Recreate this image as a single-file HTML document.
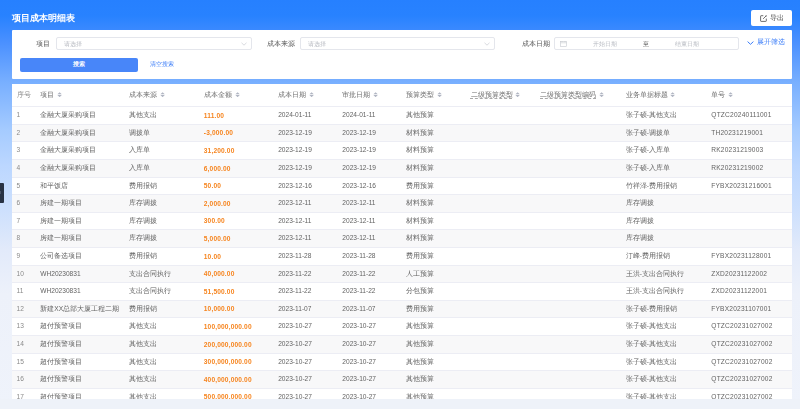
<!DOCTYPE html>
<html><head><meta charset="utf-8">
<style>
*{margin:0;padding:0;box-sizing:border-box}
html,body{width:800px;height:409px;overflow:hidden}
body{position:relative;font-family:"Liberation Sans",sans-serif;
background:linear-gradient(180deg,#2680ff 0px,#2882ff 16px,#4a90ff 42px,#78afff 82px,#a5cbff 130px,#bcd7ff 166px,#cde0fd 210px,#e2eafa 250px,#edf1fa 294px,#eff3fb 409px);}
.abs{position:absolute}
.wrap{position:absolute;left:0;top:0;width:800px;height:409px;filter:blur(0.45px)}
.title{position:absolute;left:11.8px;top:12.3px;color:#fff;font-size:9.35px;font-weight:bold;line-height:12px;white-space:nowrap}
.export{position:absolute;left:751px;top:10px;width:41px;height:16px;background:#fff;border-radius:2px}
.export svg{position:absolute;left:9px;top:5px;width:7px;height:7px}
.export span{position:absolute;left:19px;top:3.2px;font-size:6.5px;line-height:10px;color:#4a4a4a;font-weight:500}
.card{position:absolute;left:12px;top:30px;width:780px;height:49px;background:#fff;border-radius:1px}
.lbl{position:absolute;font-size:6.5px;line-height:10px;color:#555;font-weight:500;white-space:nowrap}
.inp{position:absolute;top:7px;height:12.5px;border:0.6px solid #e4e6ec;border-radius:2px;background:#fff}
.ph{position:absolute;font-size:5.7px;line-height:10px;color:#b9bcc3;white-space:nowrap}
.btn{position:absolute;left:8px;top:28px;width:118px;height:14px;background:#4886f9;border-radius:2px;color:#fff;font-size:6px;line-height:13.6px;text-align:center;font-weight:bold}
.link{position:absolute;font-size:6px;line-height:10px;color:#3a7cf8;white-space:nowrap}
.table{position:absolute;left:12px;top:84px;width:780px;height:330px;background:#fff;overflow:hidden}
.h{position:absolute;top:6px;height:10px;font-size:6.5px;font-weight:500;line-height:10px;color:#6e6e6e;white-space:nowrap;display:flex;align-items:center}
.h.seq{color:#8c8c8c}
.h.ul span{text-decoration:underline dashed #a8a8a8;text-underline-offset:1.2px;text-decoration-thickness:0.7px}
.sort{width:5.2px;height:5.4px;margin-left:2.8px;fill:#b0b5c2;position:relative;top:-0.3px}
.row{position:absolute;left:0;width:780px;height:17.65px;border-top:0.7px solid #ecedf4;background:#fff}
.row.even{background:#f8f8f9}
.c{position:absolute;top:3.0px;font-size:6.6px;line-height:10px;color:#636363;font-weight:500;white-space:nowrap}
.c.amt{color:#f6841e;font-weight:bold;letter-spacing:0.15px;top:3.6px}
.c.seq{color:#8a8a8a}
.c.doc{letter-spacing:0.2px}
.tab{position:absolute;left:0;top:183.1px;width:4px;height:19.5px;background:#283244;border-radius:0 1px 1px 0}
.tab:after{content:"";position:absolute;left:0;top:8px;width:1px;height:3px;background:#4a5466}
.frost{position:absolute;left:0;top:398.7px;width:800px;height:11px;background:#eef2f9}
</style></head><body><div class="wrap">
<div class="title">项目成本明细表</div>
<div class="export"><svg viewBox="0 0 7 7"><path d="M3.3 0.7 H1.1 Q0.6 0.7 0.6 1.2 V5.9 Q0.6 6.4 1.1 6.4 H5.8 Q6.3 6.4 6.3 5.9 V3.6" fill="none" stroke="#555" stroke-width="0.85"/><path d="M3.1 3.9 L6.2 0.8" fill="none" stroke="#555" stroke-width="0.85"/><circle cx="6.1" cy="0.9" r="0.6" fill="#555"/></svg><span>导出</span></div>
<div class="card">
  <div class="lbl" style="left:24.4px;top:8.5px">项目</div>
  <div class="inp" style="left:44px;width:196px"><div class="ph" style="left:7px;top:0.7px">请选择</div>
    <svg class="abs" style="left:183.5px;top:4.2px;width:6px;height:4px" viewBox="0 0 6 4"><path d="M0.5 0.8 L3 3.2 L5.5 0.8" fill="none" stroke="#c0c3c9" stroke-width="0.6"/></svg></div>
  <div class="lbl" style="left:254.8px;top:8.5px">成本来源</div>
  <div class="inp" style="left:288px;width:195px"><div class="ph" style="left:7px;top:0.7px">请选择</div>
    <svg class="abs" style="left:182.5px;top:4.2px;width:6px;height:4px" viewBox="0 0 6 4"><path d="M0.5 0.8 L3 3.2 L5.5 0.8" fill="none" stroke="#c0c3c9" stroke-width="0.6"/></svg></div>
  <div class="lbl" style="left:510.2px;top:8.5px">成本日期</div>
  <div class="inp" style="left:542px;width:185px">
    <svg class="abs" style="left:5.2px;top:2.6px;width:7px;height:6px" viewBox="0 0 7 6"><rect x="0.6" y="0.6" width="5.8" height="4.8" fill="none" stroke="#c6c9cf" stroke-width="0.6"/><path d="M0.6 1.8 H6.4 M2 0 V1.2 M5 0 V1.2" stroke="#c6c9cf" stroke-width="0.6"/></svg>
    <div class="ph" style="left:37.6px;top:0.6px">开始日期</div>
    <div class="lbl" style="left:87.6px;top:0.8px;font-size:5.8px;color:#444">至</div>
    <div class="ph" style="left:120.4px;top:0.6px">结束日期</div>
  </div>
  <svg class="abs" style="left:734.5px;top:10.6px;width:7px;height:4px" viewBox="0 0 7 4"><path d="M0.6 0.6 L3.5 3.3 L6.4 0.6" fill="none" stroke="#3a7cf8" stroke-width="1"/></svg>
  <div class="link" style="left:744.6px;top:7.4px;font-size:6.5px;font-weight:500;color:#3a7cf8">展开筛选</div>
  <div class="btn">搜索</div>
  <div class="link" style="left:138px;top:29.2px;font-size:5.7px">清空搜索</div>
</div>
<div class="table">
<div class="h seq" style="left:4.60px"><span>序号</span></div>
<div class="h" style="left:28.30px"><span>项目</span><svg class="sort" viewBox="0 0 5 5.4"><path d="M0.3 2.3 L2.5 0.2 L4.7 2.3Z M0.3 3.1 L2.5 5.2 L4.7 3.1Z"/></svg></div>
<div class="h" style="left:116.75px"><span>成本来源</span><svg class="sort" viewBox="0 0 5 5.4"><path d="M0.3 2.3 L2.5 0.2 L4.7 2.3Z M0.3 3.1 L2.5 5.2 L4.7 3.1Z"/></svg></div>
<div class="h" style="left:191.80px"><span>成本金额</span><svg class="sort" viewBox="0 0 5 5.4"><path d="M0.3 2.3 L2.5 0.2 L4.7 2.3Z M0.3 3.1 L2.5 5.2 L4.7 3.1Z"/></svg></div>
<div class="h" style="left:266.20px"><span>成本日期</span><svg class="sort" viewBox="0 0 5 5.4"><path d="M0.3 2.3 L2.5 0.2 L4.7 2.3Z M0.3 3.1 L2.5 5.2 L4.7 3.1Z"/></svg></div>
<div class="h" style="left:330.30px"><span>审批日期</span><svg class="sort" viewBox="0 0 5 5.4"><path d="M0.3 2.3 L2.5 0.2 L4.7 2.3Z M0.3 3.1 L2.5 5.2 L4.7 3.1Z"/></svg></div>
<div class="h" style="left:394.30px"><span>预算类型</span><svg class="sort" viewBox="0 0 5 5.4"><path d="M0.3 2.3 L2.5 0.2 L4.7 2.3Z M0.3 3.1 L2.5 5.2 L4.7 3.1Z"/></svg></div>
<div class="h ul" style="left:458.60px"><span>二级预算类型</span><svg class="sort" viewBox="0 0 5 5.4"><path d="M0.3 2.3 L2.5 0.2 L4.7 2.3Z M0.3 3.1 L2.5 5.2 L4.7 3.1Z"/></svg></div>
<div class="h ul" style="left:528.40px"><span>二级预算类型编码</span><svg class="sort" viewBox="0 0 5 5.4"><path d="M0.3 2.3 L2.5 0.2 L4.7 2.3Z M0.3 3.1 L2.5 5.2 L4.7 3.1Z"/></svg></div>
<div class="h" style="left:613.70px"><span>业务单据标题</span><svg class="sort" viewBox="0 0 5 5.4"><path d="M0.3 2.3 L2.5 0.2 L4.7 2.3Z M0.3 3.1 L2.5 5.2 L4.7 3.1Z"/></svg></div>
<div class="h" style="left:699.30px"><span>单号</span><svg class="sort" viewBox="0 0 5 5.4"><path d="M0.3 2.3 L2.5 0.2 L4.7 2.3Z M0.3 3.1 L2.5 5.2 L4.7 3.1Z"/></svg></div>
<div class="row" style="top:22.30px"><div class="c seq" style="left:4.60px">1</div><div class="c" style="left:28.30px">金融大厦采购项目</div><div class="c" style="left:116.75px">其他支出</div><div class="c amt" style="left:191.80px">111.00</div><div class="c" style="left:266.20px">2024-01-11</div><div class="c" style="left:330.30px">2024-01-11</div><div class="c" style="left:394.30px">其他预算</div><div class="c" style="left:613.70px">张子硕-其他支出</div><div class="c doc" style="left:699.30px">QTZC20240111001</div></div>
<div class="row even" style="top:39.89px"><div class="c seq" style="left:4.60px">2</div><div class="c" style="left:28.30px">金融大厦采购项目</div><div class="c" style="left:116.75px">调拨单</div><div class="c amt" style="left:191.80px">-3,000.00</div><div class="c" style="left:266.20px">2023-12-19</div><div class="c" style="left:330.30px">2023-12-19</div><div class="c" style="left:394.30px">材料预算</div><div class="c" style="left:613.70px">张子硕-调拨单</div><div class="c doc" style="left:699.30px">TH20231219001</div></div>
<div class="row" style="top:57.48px"><div class="c seq" style="left:4.60px">3</div><div class="c" style="left:28.30px">金融大厦采购项目</div><div class="c" style="left:116.75px">入库单</div><div class="c amt" style="left:191.80px">31,200.00</div><div class="c" style="left:266.20px">2023-12-19</div><div class="c" style="left:330.30px">2023-12-19</div><div class="c" style="left:394.30px">材料预算</div><div class="c" style="left:613.70px">张子硕-入库单</div><div class="c doc" style="left:699.30px">RK20231219003</div></div>
<div class="row even" style="top:75.07px"><div class="c seq" style="left:4.60px">4</div><div class="c" style="left:28.30px">金融大厦采购项目</div><div class="c" style="left:116.75px">入库单</div><div class="c amt" style="left:191.80px">6,000.00</div><div class="c" style="left:266.20px">2023-12-19</div><div class="c" style="left:330.30px">2023-12-19</div><div class="c" style="left:394.30px">材料预算</div><div class="c" style="left:613.70px">张子硕-入库单</div><div class="c doc" style="left:699.30px">RK20231219002</div></div>
<div class="row" style="top:92.66px"><div class="c seq" style="left:4.60px">5</div><div class="c" style="left:28.30px">和平饭店</div><div class="c" style="left:116.75px">费用报销</div><div class="c amt" style="left:191.80px">50.00</div><div class="c" style="left:266.20px">2023-12-16</div><div class="c" style="left:330.30px">2023-12-16</div><div class="c" style="left:394.30px">费用预算</div><div class="c" style="left:613.70px">竹祥泽-费用报销</div><div class="c doc" style="left:699.30px">FYBX20231216001</div></div>
<div class="row even" style="top:110.25px"><div class="c seq" style="left:4.60px">6</div><div class="c" style="left:28.30px">房建一期项目</div><div class="c" style="left:116.75px">库存调拨</div><div class="c amt" style="left:191.80px">2,000.00</div><div class="c" style="left:266.20px">2023-12-11</div><div class="c" style="left:330.30px">2023-12-11</div><div class="c" style="left:394.30px">材料预算</div><div class="c" style="left:613.70px">库存调拨</div></div>
<div class="row" style="top:127.84px"><div class="c seq" style="left:4.60px">7</div><div class="c" style="left:28.30px">房建一期项目</div><div class="c" style="left:116.75px">库存调拨</div><div class="c amt" style="left:191.80px">300.00</div><div class="c" style="left:266.20px">2023-12-11</div><div class="c" style="left:330.30px">2023-12-11</div><div class="c" style="left:394.30px">材料预算</div><div class="c" style="left:613.70px">库存调拨</div></div>
<div class="row even" style="top:145.43px"><div class="c seq" style="left:4.60px">8</div><div class="c" style="left:28.30px">房建一期项目</div><div class="c" style="left:116.75px">库存调拨</div><div class="c amt" style="left:191.80px">5,000.00</div><div class="c" style="left:266.20px">2023-12-11</div><div class="c" style="left:330.30px">2023-12-11</div><div class="c" style="left:394.30px">材料预算</div><div class="c" style="left:613.70px">库存调拨</div></div>
<div class="row" style="top:163.02px"><div class="c seq" style="left:4.60px">9</div><div class="c" style="left:28.30px">公司备选项目</div><div class="c" style="left:116.75px">费用报销</div><div class="c amt" style="left:191.80px">10.00</div><div class="c" style="left:266.20px">2023-11-28</div><div class="c" style="left:330.30px">2023-11-28</div><div class="c" style="left:394.30px">费用预算</div><div class="c" style="left:613.70px">汀峰-费用报销</div><div class="c doc" style="left:699.30px">FYBX20231128001</div></div>
<div class="row even" style="top:180.61px"><div class="c seq" style="left:4.60px">10</div><div class="c" style="left:28.30px">WH20230831</div><div class="c" style="left:116.75px">支出合同执行</div><div class="c amt" style="left:191.80px">40,000.00</div><div class="c" style="left:266.20px">2023-11-22</div><div class="c" style="left:330.30px">2023-11-22</div><div class="c" style="left:394.30px">人工预算</div><div class="c" style="left:613.70px">王洪-支出合同执行</div><div class="c doc" style="left:699.30px">ZXD20231122002</div></div>
<div class="row" style="top:198.20px"><div class="c seq" style="left:4.60px">11</div><div class="c" style="left:28.30px">WH20230831</div><div class="c" style="left:116.75px">支出合同执行</div><div class="c amt" style="left:191.80px">51,500.00</div><div class="c" style="left:266.20px">2023-11-22</div><div class="c" style="left:330.30px">2023-11-22</div><div class="c" style="left:394.30px">分包预算</div><div class="c" style="left:613.70px">王洪-支出合同执行</div><div class="c doc" style="left:699.30px">ZXD20231122001</div></div>
<div class="row even" style="top:215.79px"><div class="c seq" style="left:4.60px">12</div><div class="c" style="left:28.30px">新建XX总部大厦工程二期</div><div class="c" style="left:116.75px">费用报销</div><div class="c amt" style="left:191.80px">10,000.00</div><div class="c" style="left:266.20px">2023-11-07</div><div class="c" style="left:330.30px">2023-11-07</div><div class="c" style="left:394.30px">费用预算</div><div class="c" style="left:613.70px">张子硕-费用报销</div><div class="c doc" style="left:699.30px">FYBX20231107001</div></div>
<div class="row" style="top:233.38px"><div class="c seq" style="left:4.60px">13</div><div class="c" style="left:28.30px">超付预警项目</div><div class="c" style="left:116.75px">其他支出</div><div class="c amt" style="left:191.80px">100,000,000.00</div><div class="c" style="left:266.20px">2023-10-27</div><div class="c" style="left:330.30px">2023-10-27</div><div class="c" style="left:394.30px">其他预算</div><div class="c" style="left:613.70px">张子硕-其他支出</div><div class="c doc" style="left:699.30px">QTZC20231027002</div></div>
<div class="row even" style="top:250.97px"><div class="c seq" style="left:4.60px">14</div><div class="c" style="left:28.30px">超付预警项目</div><div class="c" style="left:116.75px">其他支出</div><div class="c amt" style="left:191.80px">200,000,000.00</div><div class="c" style="left:266.20px">2023-10-27</div><div class="c" style="left:330.30px">2023-10-27</div><div class="c" style="left:394.30px">其他预算</div><div class="c" style="left:613.70px">张子硕-其他支出</div><div class="c doc" style="left:699.30px">QTZC20231027002</div></div>
<div class="row" style="top:268.56px"><div class="c seq" style="left:4.60px">15</div><div class="c" style="left:28.30px">超付预警项目</div><div class="c" style="left:116.75px">其他支出</div><div class="c amt" style="left:191.80px">300,000,000.00</div><div class="c" style="left:266.20px">2023-10-27</div><div class="c" style="left:330.30px">2023-10-27</div><div class="c" style="left:394.30px">其他预算</div><div class="c" style="left:613.70px">张子硕-其他支出</div><div class="c doc" style="left:699.30px">QTZC20231027002</div></div>
<div class="row even" style="top:286.15px"><div class="c seq" style="left:4.60px">16</div><div class="c" style="left:28.30px">超付预警项目</div><div class="c" style="left:116.75px">其他支出</div><div class="c amt" style="left:191.80px">400,000,000.00</div><div class="c" style="left:266.20px">2023-10-27</div><div class="c" style="left:330.30px">2023-10-27</div><div class="c" style="left:394.30px">其他预算</div><div class="c" style="left:613.70px">张子硕-其他支出</div><div class="c doc" style="left:699.30px">QTZC20231027002</div></div>
<div class="row" style="top:303.74px"><div class="c seq" style="left:4.60px">17</div><div class="c" style="left:28.30px">超付预警项目</div><div class="c" style="left:116.75px">其他支出</div><div class="c amt" style="left:191.80px">500,000,000.00</div><div class="c" style="left:266.20px">2023-10-27</div><div class="c" style="left:330.30px">2023-10-27</div><div class="c" style="left:394.30px">其他预算</div><div class="c" style="left:613.70px">张子硕-其他支出</div><div class="c doc" style="left:699.30px">QTZC20231027002</div></div>
</div>
<div class="tab"></div>
<div class="frost"></div>
</div></body></html>
